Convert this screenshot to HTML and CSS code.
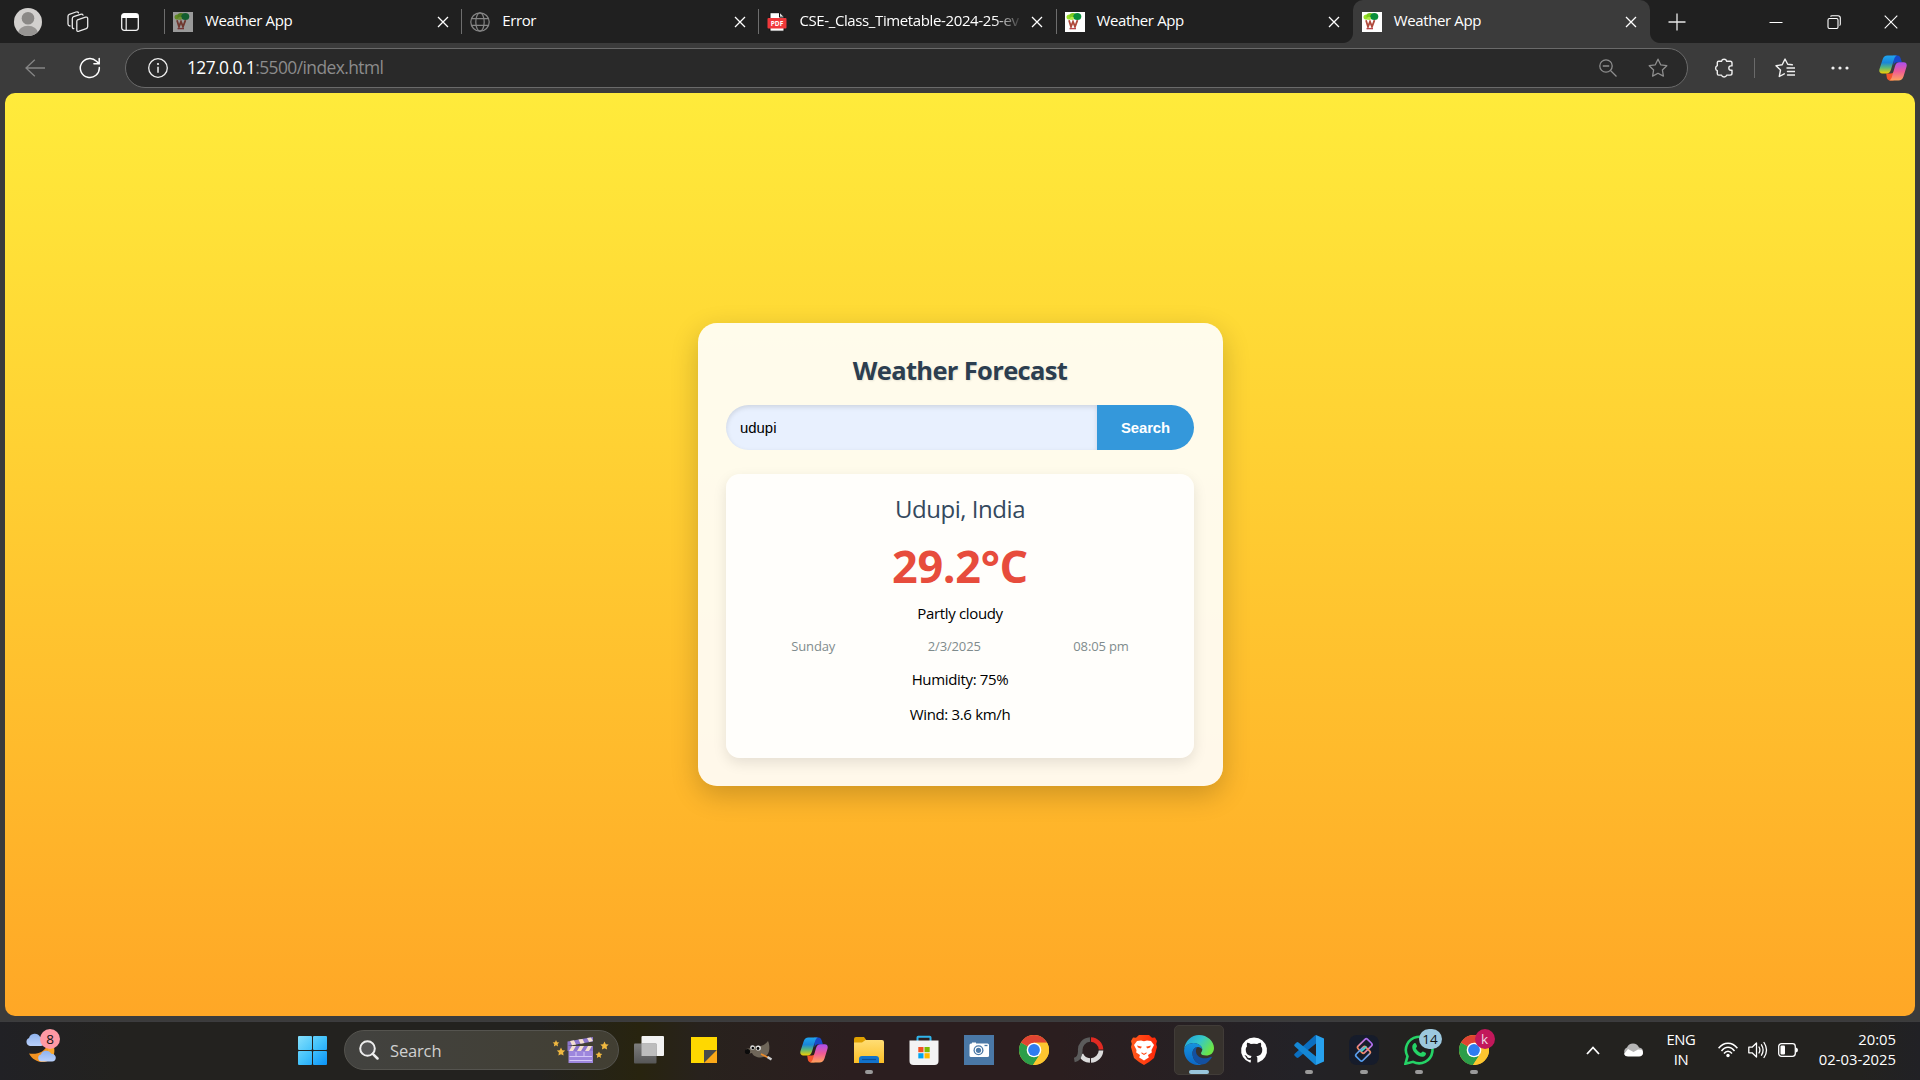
FILE: index.html
```html
<!DOCTYPE html>
<html lang="en">
<head>
<meta charset="utf-8">
<title>Weather App</title>
<link rel="stylesheet" href="styles.css">
</head>
<body>
<svg class="defs" width="0" height="0" aria-hidden="true">
  <defs>
    <linearGradient id="cpA" x1="0" y1="0" x2="0" y2="1"><stop offset="0" stop-color="#1fa5f0"/><stop offset=".4" stop-color="#1a86d8"/><stop offset=".68" stop-color="#5cb878"/><stop offset="1" stop-color="#f5d000"/></linearGradient>
    <linearGradient id="cpB" x1="0" y1="0" x2="0" y2="1"><stop offset="0" stop-color="#a94ff0"/><stop offset=".5" stop-color="#ee5a96"/><stop offset="1" stop-color="#ffa35c"/></linearGradient>
    <linearGradient id="edA" x1="0" y1="0" x2="1" y2=".5"><stop offset="0" stop-color="#1e9de0"/><stop offset=".55" stop-color="#35c8c8"/><stop offset="1" stop-color="#6be548"/></linearGradient>
    <linearGradient id="edB" x1="0" y1="0" x2="0" y2="1"><stop offset="0" stop-color="#1593de"/><stop offset="1" stop-color="#0c66c4"/></linearGradient>
    <linearGradient id="winG" gradientUnits="userSpaceOnUse" x1="0" y1="0" x2="29" y2="29"><stop offset="0" stop-color="#86e0fc"/><stop offset=".5" stop-color="#42c2fb"/><stop offset="1" stop-color="#0a93f8"/></linearGradient>
    <linearGradient id="foldG" x1="0" y1="0" x2="0" y2="1"><stop offset="0" stop-color="#ffdd74"/><stop offset="1" stop-color="#fcbf26"/></linearGradient>
    <linearGradient id="cloudG" x1="0" y1="0" x2="0" y2="1"><stop offset="0" stop-color="#8fb3ee"/><stop offset="1" stop-color="#b9d0fb"/></linearGradient>
    <linearGradient id="brG" x1="0" y1="0" x2="1" y2="0"><stop offset="0" stop-color="#ff5a1c"/><stop offset="1" stop-color="#ff2608"/></linearGradient>
    <linearGradient id="tvG" x1="0" y1="0" x2="0" y2="1"><stop offset="0" stop-color="#7d7d7d"/><stop offset="1" stop-color="#565656"/></linearGradient>
    <linearGradient id="lkA" x1="1" y1="0" x2="0" y2="0"><stop offset="0" stop-color="#a86af0"/><stop offset=".6" stop-color="#d987c8"/><stop offset="1" stop-color="#f5885a"/></linearGradient>
    <linearGradient id="lkB" x1="1" y1="0" x2="0" y2="0"><stop offset="0" stop-color="#f5885a"/><stop offset=".3" stop-color="#7fa4e8"/><stop offset="1" stop-color="#4f9cf0"/></linearGradient>
    <symbol id="favicon" viewBox="0 0 20 20">
      <rect width="20" height="20" fill="#fff"/>
      <ellipse cx="4.500" cy="5" rx="3" ry="2.600" fill="#9be02a"/><ellipse cx="8" cy="4" rx="3.600" ry="2.900" fill="#7ccb1d"/><ellipse cx="12.300" cy="4.500" rx="4" ry="3.600" fill="#0a8f3c"/><ellipse cx="7" cy="6.300" rx="2" ry="1.600" fill="#b2ea4a"/>
      <path d="M4 8.300l2 6.400 2-5 2 5 2.500-6.600" fill="none" stroke="#b04a3c" stroke-width="1.800"/>
      <path d="M4.500 16.600h6.500" stroke="#b9474b" stroke-width="1.400"/>
    </symbol>
    <symbol id="close" viewBox="0 0 12 12"><path d="M1 1l10 10M11 1L1 11" stroke="currentColor" stroke-width="1.300" fill="none"/></symbol>
    <symbol id="copilot" viewBox="0 0 28 26">
      <path d="M14 .5h4.500c1.900 0 2.800 1.500 3.200 3l1.200 3.700h-4.500c-2.200 0-3 .8-3.800 3.200z" fill="#1748c9"/>
      <path d="M7.200 18.500h4.500c2 0 3-.8 3.700-3.200L14.500 25.500H11c-2 0-2.800-1.400-3.200-3z" fill="#f4552c"/>
      <path d="M8.500.5H18c-1.600.6-2.400 2-3 4L12 14.600c-.8 2.600-2 3.900-4.500 3.900H3.300C.7 18.500-.2 16.700.5 14L3.600 4.500C4.400 1.900 6 .5 8.500.5z" fill="url(#cpA)"/>
      <path d="M19.500 25.500H10c1.600-.6 2.500-2 3-4L16 11.300c.8-2.700 2-4 4.500-4h4.200c2.600 0 3.500 1.900 2.800 4.500l-3 9.700c-.8 2.600-2.500 4-5 4z" fill="url(#cpB)"/>
    </symbol>
    <symbol id="chrome" viewBox="0 0 30 30">
      <circle cx="15" cy="15" r="15" fill="#fdc62f"/>
      <path d="M15 15L2 7.500A15 15 0 0 0 14 30l7.500-11.500z" fill="#2b9e49"/>
      <path d="M15 15L2 7.500A15 15 0 0 1 28.100 7.800H15z" fill="#df4432"/>
      <path d="M15 7.800h13.100A15 15 0 0 1 14 30l7.500-11.500z" fill="#fdc62f"/>
      <circle cx="15" cy="15" r="7.300" fill="#fff"/><circle cx="15" cy="15" r="5.900" fill="#2f7cf0"/>
    </symbol>
    <symbol id="star" viewBox="0 0 20 20"><path d="M10 1.200l2.700 5.600 6.100.9-4.400 4.300 1 6.100L10 15.200l-5.400 2.900 1-6.100L1.200 7.700l6.100-.9z" fill="none" stroke="currentColor" stroke-width="1.300" stroke-linejoin="round"/></symbol>
  </defs>
</svg>

<header class="tabstrip">
  <svg class="profile" viewBox="0 0 28 28"><defs><clipPath id="pc"><circle cx="14" cy="14" r="14"/></clipPath></defs><g clip-path="url(#pc)"><rect width="28" height="28" fill="#d2d0ce"/><circle cx="14" cy="10.200" r="6.300" fill="#8a8886"/><ellipse cx="14" cy="25" rx="10" ry="7.200" fill="#979593"/></g></svg>
  <svg class="workspaces" viewBox="0 0 22 22" fill="none" stroke="#e8e8e8" stroke-width="1.300" stroke-linejoin="round" stroke-linecap="round"><path d="M10.500 8.800l8-2.600q2.200-.6 2.200 1.400v8q0 1.500-1.400 2l-7.300 2.600q-2.200.7-2.200-1.300v-8.300q0-1.400.7-1.800z"/><path d="M6.800 17.600q-1.500 0-1.500-1.600V7.700q0-1.500 1.300-2L13.500 3.300q2-.6 2.500.8"/><path d="M3 15q-2-.3-2-2V5.300q0-1.500 1.300-2L9 1q2-.6 2.500.8"/></svg>
  <svg class="tab-actions" viewBox="0 0 18 18"><rect x=".7" y=".7" width="16.600" height="16.600" rx="2.500" fill="none" stroke="#f2f2f2" stroke-width="1.300"/><path d="M.7 5V3.200Q.7.700 3.200.7h11.600q2.500 0 2.500 2.500V5z" fill="#fff"/><path d="M5.200 5v12" stroke="#f2f2f2" stroke-width="1.200"/></svg>
  <nav class="tabs">
    <div class="tab"><svg class="fav dim"><use href="#favicon"/></svg><span class="tab-title">Weather App</span><svg class="x"><use href="#close"/></svg></div>
    <div class="tab"><svg class="fav" viewBox="0 0 20 20" fill="none" stroke="#858585" stroke-width="1.200"><circle cx="10" cy="10" r="9.200"/><ellipse cx="10" cy="10" rx="4.200" ry="9.200"/><path d="M1.500 6.700h17M1.500 13.300h17"/></svg><span class="tab-title">Error</span><svg class="x"><use href="#close"/></svg></div>
    <div class="tab"><svg class="fav" viewBox="0 0 20 20"><path d="M3 .7h9.500L17 5.200v14H3z" fill="#fff" stroke="#111" stroke-width="1"/><path d="M12.500.7v4.500H17" fill="#ddd" stroke="#111"/><rect x=".5" y="6" width="19" height="10.500" rx="1" fill="#f0383b"/><text x="10" y="13.800" class="pdf">PDF</text></svg><span class="tab-title fade">CSE-_Class_Timetable-2024-25-ev</span><svg class="x"><use href="#close"/></svg></div>
    <div class="tab"><svg class="fav"><use href="#favicon"/></svg><span class="tab-title">Weather App</span><svg class="x"><use href="#close"/></svg></div>
    <div class="tab active"><svg class="fav"><use href="#favicon"/></svg><span class="tab-title">Weather App</span><svg class="x"><use href="#close"/></svg></div>
  </nav>
  <svg class="plus" viewBox="0 0 18 18"><path d="M9 .5v17M.5 9h17" stroke="#e8e8e8" stroke-width="1.300"/></svg>
  <div class="window-buttons">
    <svg viewBox="0 0 14 14"><path d="M.5 7.500h13" stroke="#fff"/></svg>
    <svg viewBox="0 0 14 14" fill="none" stroke="#fff" stroke-width="1.100"><rect x="1" y="3.500" width="10" height="10" rx="1.500"/><path d="M3.500 1.500Q3.800.8 5 .8h6q2.300 0 2.300 2.300V9q0 1.300-.8 1.600"/></svg>
    <svg viewBox="0 0 14 14"><path d="M.7.700l12.600 12.600M13.300.7L.7 13.300" stroke="#fff" stroke-width="1.100"/></svg>
  </div>
</header>

<div class="toolbar">
  <svg class="back" viewBox="0 0 20 18" fill="none" stroke="#858585" stroke-width="1.300"><path d="M20 9H1M9.800.7L1 9l8.800 8.300"/></svg>
  <svg class="reload" viewBox="0 0 22 22" fill="none" stroke="#fff" stroke-width="1.500" stroke-linecap="round"><path d="M20.300 10.500A9.500 9.500 0 1 1 17.500 4.300L20 6.600M20.200 1.500v5.300h-5.300"/></svg>
  <div class="address">
    <svg class="info" viewBox="0 0 20 20"><circle cx="10" cy="10" r="9.300" fill="none" stroke="#f0f0f0" stroke-width="1.300"/><path d="M10 8.700v6" stroke="#f0f0f0" stroke-width="1.500"/><circle cx="10" cy="6" r="1.100" fill="#f0f0f0"/></svg>
    <span class="url"><b>127.0.0.1</b>:5500/index.html</span>
    <svg class="zoom" viewBox="0 0 18 18" fill="none" stroke="#8e8e8e" stroke-width="1.300"><circle cx="7" cy="7" r="6.200"/><path d="M11.500 11.500l6 6M3.800 7h6.400"/></svg>
    <svg class="star"><use href="#star"/></svg>
  </div>
  <svg class="puzzle" viewBox="0 0 20 20" fill="none" stroke="#f0f0f0" stroke-width="1.400" stroke-linejoin="round"><path d="M4.700 3.200h2.800a2.700 2.700 0 0 1 5.200 0h3.500q1.800 0 1.800 1.800v2.900h-1a2.200 2.200 0 0 0 0 4.400h1v3q0 1.800-1.800 1.800h-3.500a2.700 2.700 0 0 1-5.200 0H4.700q-1.400 0-1.400-1.400v-3a2.700 2.700 0 0 1 0-5V4.600q0-1.400 1.400-1.400z"/></svg>
  <i class="divider"></i>
  <svg class="favorites" viewBox="0 0 20 20" fill="none" stroke="#f0f0f0" stroke-width="1.400" stroke-linejoin="round" stroke-linecap="round"><path d="M17.300 6.800l-4.600-.5L10 1 7.200 6.800 1 7.700l4.500 4.300-1.200 6.500 5-2.700M12 10h8M12.500 13.500H20M12.500 17H20"/></svg>
  <svg class="dots" viewBox="0 0 18 4" fill="#f0f0f0"><circle cx="2" cy="2" r="1.600"/><circle cx="9" cy="2" r="1.600"/><circle cx="16" cy="2" r="1.600"/></svg>
  <svg class="copilot"><use href="#copilot"/></svg>
</div>

<main class="page">
  <section class="card">
    <h1>Weather Forecast</h1>
    <div class="search-row">
      <input class="city" type="text" value="udupi">
      <button class="go">Search</button>
    </div>
    <article class="result">
      <h2>Udupi, India</h2>
      <p class="temp">29.2°C</p>
      <p class="cond">Partly cloudy</p>
      <div class="when"><span>Sunday</span><span>2/3/2025</span><span>08:05 pm</span></div>
      <p class="humidity">Humidity: 75%</p>
      <p class="wind">Wind: 3.6 km/h</p>
    </article>
  </section>
</main>

<footer class="taskbar">
  <div class="widget">
    <svg viewBox="0 0 34 34"><path d="M26 10c4 6 3 13-2 16.500-6.500 5-16.500 2.500-21-6 8 1.500 17-2 18-9z" fill="#f39322"/><path d="M22 12h6v10h-6z" fill="#f7a62c"/><path d="M4 13a4.200 4.200 0 0 1-1-8 6 6 0 0 1 11-1.200c3.500 0 5 2.400 5 4.800S17.500 13 15 13z" fill="url(#cloudG)"/><path d="M15.500 28.500a3.600 3.600 0 0 1-.5-7.100 5.600 5.600 0 0 1 10.200-.6c3 0 4.600 1.900 4.600 4s-1.500 3.700-3.700 3.700z" fill="url(#cloudG)"/></svg>
    <span class="badge pink">8</span>
  </div>
  <svg class="start" viewBox="0 0 29 29" fill="url(#winG)"><rect width="14" height="14" rx="1"/><rect x="15" width="14" height="14" rx="1"/><rect y="15" width="14" height="14" rx="1"/><rect x="15" y="15" width="14" height="14" rx="1"/></svg>
  <div class="search">
    <svg class="lens" viewBox="0 0 20 20" fill="none" stroke="#eee" stroke-width="2" stroke-linecap="round"><circle cx="8.500" cy="8.500" r="7.300" fill="#555"/><path d="M13.800 13.800l4.700 4.700" stroke-width="2.500"/></svg>
    <span class="search-label">Search</span>
    <svg class="clapper" viewBox="0 0 58 28">
      <g fill="#f0b840"><path d="M4 4l1 2.200 2.300.3-1.700 1.600.4 2.400L4 9.300l-2.100 1.200.4-2.400L.6 6.500 3 6.200z"/><path d="M9 11.500l1.300 2.700 2.900.4-2.100 2 .5 3L9 18.200l-2.600 1.400.5-3-2.100-2 2.900-.4z"/><path d="M52.500 5.500l1.300 2.700 2.900.4-2.100 2 .5 3-2.600-1.400-2.600 1.400.5-3-2.100-2 2.900-.4z"/><path d="M47 15.500l1 2.100 2.300.3-1.700 1.600.4 2.400-2-1.200-2.100 1.200.4-2.400-1.700-1.600 2.300-.3z"/></g>
      <path d="M15.500 5.500L41 1v4.500L15.500 10z" fill="#8c76cc"/><path d="M18 5l4-.7 2 4.300-4 .7zM26.500 3.600l4-.7 2 4.200-4 .7zM35 2.100l4-.7 1.900 3.700-3.800.8z" fill="#f5dfd0"/>
      <rect x="15.500" y="10" width="25.500" height="5" fill="#8c76cc"/><path d="M20 10h4l-3 5h-4zM28 10h4l-3 5h-4zM36 10h4l-3 5h-4z" fill="#f5dfd0"/>
      <rect x="16.500" y="15" width="24.500" height="12" fill="#9d86dd"/><path d="M17.500 20.500h22.500M17.500 24.500h22.500M24 16v4M32 16v4" stroke="#d6c8f7" stroke-width="1"/>
    </svg>
  </div>
  <div class="apps">
    <div class="app"><svg viewBox="0 0 30 30"><rect x="7.500" y="1" width="22.500" height="20" rx="1" fill="#f2f2f2"/><rect y="8.500" width="22.500" height="20" rx="1" fill="url(#tvG)"/><path d="M7.500 8.500h15V21h-15z" fill="#bdbdbd"/></svg></div>
    <div class="app"><svg viewBox="0 0 30 30"><path d="M2 2h26v13L15 28H2z" fill="#ffd800"/><path d="M15 15h13L15 28z" fill="#4a4a4a"/><path d="M28 15v13H15z" fill="#fba919"/></svg></div>
    <div class="app"><svg viewBox="0 0 30 30"><path d="M24 6c1.500 3 2.500 10-1 14-4 4-13 3-15-2l-5 1-1-5 5-1c2-1 5-3 8-2 3 0 6-1 9-5z" fill="#6f6659"/><circle cx="8.500" cy="12.500" r="2.300" fill="#e4e4e4"/><circle cx="14.300" cy="13" r="2.600" fill="#e4e4e4"/><circle cx="8.800" cy="13" r="1.300"/><circle cx="14" cy="13.500" r="1.400"/><circle cx="3.500" cy="16.500" r="2.600" fill="#0b0b0b"/><path d="M17 19l7 3.500" stroke="#e98a2b" stroke-width="1.700"/><path d="M23.500 22l4 2.500" stroke="#cfcfcf" stroke-width="2.400"/></svg></div>
    <div class="app"><svg viewBox="0 0 30 30"><use href="#copilot" x="1" y="2" width="28" height="26"/></svg></div>
    <div class="app"><svg viewBox="0 0 30 30"><path d="M0 4q0-2 2-2h8l3 4h-2l-3 4H0z" fill="#dfa000"/><path d="M0 7.500h8L11.500 5H28q2 0 2 2v21H0z" fill="url(#foldG)"/><path d="M5 28v-4q0-3 3-3h14q3 0 3 3v4z" fill="#1273cc"/><path d="M8 24.500h14" stroke="#0b4f97" stroke-width="1.200"/></svg><i class="dot"></i></div>
    <div class="app"><svg viewBox="0 0 30 30"><path d="M8.500 7V2.500q0-.7.700-.7h11.600q.7 0 .7.700V7" fill="none" stroke="#30b4ea" stroke-width="2"/><path d="M.5 5.500h29V26q0 4-4 4h-21q-4 0-4-4z" fill="#f3f3f3"/><path d="M9.300 12h5.200v5.200H9.300z" fill="#f25022"/><path d="M15.500 12h5.200v5.200h-5.200z" fill="#7fba00"/><path d="M9.300 18.200h5.200v5.200H9.300z" fill="#00a4ef"/><path d="M15.500 18.200h5.200v5.200h-5.200z" fill="#ffb900"/></svg></div>
    <div class="app"><svg viewBox="0 0 30 30"><rect width="30" height="30" fill="#4a78a6"/><path d="M8 7.500h4v2H8z" fill="#fff"/><rect x="5.500" y="8.500" width="19.500" height="13.500" rx="1.500" fill="#fff"/><circle cx="14.500" cy="15.300" r="5" fill="#4a78a6"/><circle cx="14.500" cy="15.300" r="3.700" fill="#fff"/><circle cx="14.500" cy="15.300" r="2.600" fill="#4a78a6"/><path d="M20.500 10.500h3" stroke="#4a78a6" stroke-width="1.300"/></svg></div>
    <div class="app"><svg><use href="#chrome"/></svg></div>
    <div class="app"><svg viewBox="0 0 30 30" fill="none" stroke-width="4.600"><path d="M17 4.500a10.300 10.300 0 0 1 10 10" stroke="#e02a22"/><path d="M27 15.500a10.300 10.300 0 0 1-10 10M16 25.500a10.300 10.300 0 0 1-9-6" stroke="#dcdcdc"/><path d="M16 4.500A10.300 10.300 0 0 0 6.300 16q-.3 8-6 9" stroke="#5b5b5b"/></svg></div>
    <div class="app"><svg viewBox="0 0 30 30"><path d="M10 0h10l3 2.700 3-.3L28 6l-.8 3L28 12l-3 11-5 4-5 3-5-3-5-4L2 12l.8-3L2 6l2-3.600 3 .3z" fill="url(#brG)"/><path d="M8 6l4-.6 3 .8 3-.8 4 .6 3 4-2.500 5 .3 2.500-3.800 2.500.8 2.500-4.800 3-4.800-3 .8-2.500L7.200 17.500l.3-2.500L5 10z" fill="#fff"/><path d="M8 10.500l5 1.300-1.500 1.700L9 12.500zM22 10.500l-5 1.300 1.500 1.700 2.500-1zM12.500 17.200l2.500 1.500 2.500-1.500v1.200L15 20l-2.500-1.600z" fill="#ff4a18"/></svg></div>
    <div class="app current"><svg viewBox="0 0 30 30"><path d="M.2 14C1 6 7.500 0 15 0c8.500 0 15 6.500 15 13 0 5-3.500 7.500-8 7.500-3 0-5-1-5-2.300 0-.9 1.300-1.600 1.300-3.700C18.300 11 14 8 9.500 8 5 8 1.500 10.500.2 14z" fill="url(#edA)"/><path d="M.1 16C0 11 4.500 8 9.500 8c5 0 8.800 3.200 8.800 6.500-.8-1.500-2.500-2.400-4.300-2.400-3.500 0-5.500 3-5.500 6.500 0 5.500 4 10.500 9.500 11C8.500 32 .6 25 .1 16z" fill="url(#edB)"/><path d="M8.500 18.600c0-3.500 2-6 5-6.500-1.300 1.300-1.700 3-1.500 4.700.5 4 4 6.500 8.500 6.500 3 0 5-.7 6.500-1.500.8-.3 1 .3.700.8-2.500 4.200-6 7-9.700 7-5.500-.5-9.500-5.500-9.500-11z" fill="#1450a0"/></svg><i class="dot wide"></i></div>
    <div class="app"><svg viewBox="-2 -2 28 28"><path d="M12 .3a12 12 0 0 0-3.800 23.400c.6.100.8-.3.800-.6v-2c-3.300.7-4-1.600-4-1.600-.6-1.400-1.400-1.800-1.400-1.800-1-.7.1-.7.100-.7 1.200 0 1.900 1.200 1.900 1.200 1 1.800 2.800 1.300 3.500 1 0-.8.400-1.300.7-1.600-2.700-.3-5.500-1.300-5.500-6 0-1.200.5-2.300 1.300-3.100-.2-.4-.6-1.600 0-3.200 0 0 1-.3 3.400 1.200a11.500 11.500 0 0 1 6 0c2.300-1.500 3.300-1.200 3.300-1.200.7 1.600.3 2.800.2 3.200.8.800 1.200 1.900 1.200 3.200 0 4.600-2.800 5.600-5.500 5.900.5.400.9 1.100.9 2.200v3.300c0 .3.100.7.800.6A12 12 0 0 0 12 .3" fill="#fff"/></svg></div>
    <div class="app"><svg viewBox="0 0 30 30"><path d="M22 0v8.500L4.500 22.500q-1 .8-2 0L.7 20.800q-1-1 0-2L20.500.8q.7-.8 1.500-.8z" fill="#0b6fc0"/><path d="M22 30v-8.500L4.500 7.500q-1-.8-2 0L.7 9.200q-1 1 0 2L20.500 29.200q.7.800 1.500.8z" fill="#1587d4"/><path d="M22 0l8 3.500v23L22 30z" fill="#27a1ee"/></svg><i class="dot"></i></div>
    <div class="app"><svg viewBox="0 0 30 30" fill="none" stroke-width="1.700"><rect width="30" height="30" rx="8" fill="#161c2b"/><rect x="-6.700" y="-4.600" width="13.400" height="9.200" rx="1.800" transform="translate(15.800 11) rotate(-45)" stroke="url(#lkA)"/><rect x="-6.700" y="-4.600" width="13.400" height="9.200" rx="1.800" transform="translate(14 18.800) rotate(-45)" stroke="url(#lkB)"/><path d="M12 16.500l5.500-5" stroke="#4fd3c8"/></svg><i class="dot"></i></div>
    <div class="app"><svg viewBox="0 0 30 30"><path d="M1.500 28.700l2-7.300A13.300 13.300 0 1 1 9 26.800z" fill="#20201f" stroke="#25d366" stroke-width="2.600"/><path d="M10 8.500c.8-.8 1.600-.5 2 .3l1 2.300c.2.600-.9 1.700-1.200 2.200 1 2.200 2.700 3.800 5 4.800.6-.3 1.500-1.900 2.200-1.700l2.600 1.300c.8.400.5 3.300-2.600 4-4.500.8-11.500-5.500-10.700-10.500.1-1 .8-2 1.700-2.700z" fill="#25d366"/></svg><span class="badge blue">14</span><i class="dot"></i></div>
    <div class="app"><svg><use href="#chrome"/></svg><span class="badge magenta">k</span><i class="dot"></i></div>
  </div>
  <div class="tray">
    <svg class="chev" viewBox="0 0 14 9"><path d="M1 8l6-6.500L13 8" fill="none" stroke="#fff" stroke-width="1.800"/></svg>
    <svg class="cloud" viewBox="0 0 20 14"><path d="M4.500 13A4.500 4.500 0 0 1 4 4.500 6.500 6.500 0 0 1 16 4.500q4 .5 4 4.200T16 13z" fill="#b5b5b5"/><path d="M5 6l-4 5q1 2.500 4 2.500h11q3.800-.3 4-3.500 0-2-1.300-3.300L15 6.500 10.500 9z" fill="#fff"/></svg>
    <div class="lang"><span>ENG</span><span>IN</span></div>
    <svg class="wifi" viewBox="0 0 20 16" fill="none" stroke="#fff" stroke-width="1.500"><path d="M.6 6.300Q4.500 1.200 10 1.200t9.400 5.100M3.500 9Q6.300 5.200 10 5.200T16.500 9M6 11.500q1.700-2.300 4-2.300t4 2.300"/><circle cx="10" cy="13.500" r="1.700" fill="#fff" stroke="none"/></svg>
    <svg class="vol" viewBox="0 0 20 18" fill="none" stroke="#fff" stroke-width="1.300" stroke-linejoin="round" stroke-linecap="round"><path d="M.8 6.200h3.300L8.500 2v14l-4.400-4.200H.8zM11 6q1.800 3 0 6M13.500 3.800q3.200 5.200 0 10.400M16 1.500q5 7.500 0 15"/></svg>
    <svg class="batt" viewBox="0 0 20 14"><rect x=".7" y=".7" width="16.600" height="12.600" rx="2.800" fill="none" stroke="#fff" stroke-width="1.300"/><rect x="2.500" y="2.500" width="4.500" height="9" rx="1" fill="#fff"/><path d="M18 4.500q2 .5 2 2.500t-2 2.500z" fill="#fff"/></svg>
    <div class="clock"><span>20:05</span><span>02-03-2025</span></div>
  </div>
</footer>
</body>
</html>
```
FILE: styles.css
```css
* { box-sizing: border-box; }
body { margin: 0; width: 1920px; height: 1080px; overflow: hidden; display: flex; flex-direction: column; background: #3b3b3b; color: #fff; font-family: "Open Sans", "Noto Sans", sans-serif; }
svg { display: block; flex: none; }
.defs { position: absolute; }
p, h1, h2 { margin: 0; }

/* browser tab strip */
.tabstrip { height: 43px; flex: none; display: flex; align-items: center; background: #202020; }
.profile { width: 28px; height: 28px; margin-left: 14px; }
.workspaces { width: 22px; height: 22px; margin-left: 25px; }
.tab-actions { width: 18px; height: 18px; margin-left: 32px; }
.tabs { display: flex; margin-left: 25px; height: 43px; }
.tab { position: relative; width: 297.200px; display: flex; align-items: center; padding: 1px 0 0 9px; }
.tab::before { content: ""; position: absolute; left: 0; top: 9px; width: 1px; height: 25px; background: #6e6e6e; }
.tab.active { background: #3b3b3b; border-radius: 10px 10px 0 0; }
.tab.active::before, .tab.active::after { width: 10px; height: 10px; top: auto; bottom: 0; }
.tab.active::before { left: -10px; background: radial-gradient(circle at 0 0, transparent 9.500px, #3b3b3b 10.500px); }
.tab.active::after { content: ""; position: absolute; right: -10px; background: radial-gradient(circle at 100% 0, transparent 9.500px, #3b3b3b 10.500px); }
.fav { width: 20px; height: 20px; }
.fav.dim { opacity: .55; }
.tab-title { margin: 0 0 5px 12px; width: 222px; font-size: 15px; line-height: 20px; letter-spacing: -.38px; white-space: nowrap; }
.fade { -webkit-mask-image: linear-gradient(90deg, #000 195px, transparent 224px); mask-image: linear-gradient(90deg, #000 195px, transparent 224px); }
.pdf { font: bold 6.500px "Open Sans", sans-serif; fill: #fff; text-anchor: middle; }
.x { width: 12px; height: 12px; margin-left: 9.500px; }
.plus { width: 18px; height: 18px; margin-left: 18px; }
.window-buttons { margin-left: auto; margin-right: 22px; display: flex; gap: 43.500px; }
.window-buttons svg { width: 14px; height: 14px; }

/* address toolbar */
.toolbar { height: 50px; flex: none; display: flex; align-items: center; }
.back { width: 20px; height: 18px; margin-left: 25px; }
.reload { width: 22px; height: 22px; margin-left: 34px; }
.address { width: 1563px; height: 40px; margin-left: 24px; border: 1px solid #6a6a6a; border-radius: 20px; background: #292929; display: flex; align-items: center; padding: 0 19px 0 22px; color: #8c8c8c; }
.info { width: 20px; height: 20px; }
.url { margin: 0 0 3px 19px; font-size: 17.400px; line-height: 24px; letter-spacing: -.57px; white-space: nowrap; }
.url b { font-weight: 400; color: #fff; }
.zoom { width: 18px; height: 18px; margin-left: auto; }
.star { width: 20px; height: 20px; margin-left: 31px; color: #8e8e8e; }
.puzzle { width: 20px; height: 20px; margin-left: 26px; }
.divider { width: 1px; height: 20px; margin: 0 20px; background: #6a6a6a; }
.favorites { width: 20px; height: 20px; }
.dots { width: 18px; height: 4px; margin-left: 36px; }
.copilot { width: 28px; height: 26px; margin-left: 30px; }

/* weather page */
.page { flex: none; height: 923px; margin: 0 5px 5px; padding-left: 1px; border-radius: 10px; background: linear-gradient(#ffeb3b, #ffa726); display: flex; align-items: center; justify-content: center; color: #000; }
.card { width: 525px; height: 463px; padding: 28px 29px 28px 28px; border-radius: 19px; background: rgba(255,255,255,.9); box-shadow: 0 9px 28px rgba(0,0,0,.2); text-align: center; }
h1 { font-size: 25.500px; line-height: 38px; font-weight: 700; letter-spacing: -.65px; color: #2c3e50; text-shadow: 1px 1px 2px rgba(0,0,0,.1); }
.search-row { display: flex; margin-top: 16px; height: 45px; }
.city { width: 371px; border: 0; border-radius: 23px 0 0 23px; padding: 0 14px; background: #e8f0fe; box-shadow: inset 0 2px 5px rgba(0,0,0,.12); font: 14.900px "Liberation Sans", sans-serif; color: #000; }
.go { flex: 1; border: 0; border-radius: 0 23px 23px 0; background: #3498db; color: #fff; font: bold 14.900px "Liberation Sans", sans-serif; letter-spacing: -.1px; }
.result { height: 284px; margin-top: 24px; border-radius: 14px; background: rgba(255,255,255,.8); box-shadow: 0 5px 14px rgba(0,0,0,.1); padding-top: 18px; }
h2 { font-size: 24px; line-height: 34px; font-weight: 400; letter-spacing: -.45px; color: #34495e; }
.temp { margin-top: 13px; font-size: 45px; line-height: 54px; font-weight: 700; letter-spacing: -.35px; color: #e74c3c; }
.cond, .humidity, .wind { font-size: 15px; line-height: 20px; letter-spacing: -.34px; }
.cond { margin-top: 10px; }
.when { margin-top: 14px; display: flex; justify-content: space-around; padding: 0 19px; font-size: 13px; line-height: 18px; letter-spacing: -.15px; color: #7f8c8d; }
.humidity { margin-top: 14px; }
.wind { margin-top: 15px; }

/* desktop taskbar */
.taskbar { height: 59px; flex: none; display: flex; align-items: center; padding-bottom: 2px; border-top: 1px solid #3c3c3e; background: linear-gradient(90deg, #212125 0, #23221f 120px, #23221f 540px, #28240f 640px, #28221d 700px, #2b1e1f 850px, #2b1e1f 1060px, #232227 1300px, #23221f 1420px, #23221f 1860px, #212125 1920px); }
.widget { position: relative; width: 34px; height: 34px; margin-left: 26px; }
.widget svg { width: 34px; height: 34px; }
.badge { position: absolute; border-radius: 50%; height: 20px; width: 20px; display: flex; align-items: center; justify-content: center; font-size: 13.500px; color: #111; }
.pink { left: 14px; top: -4px; background: #ff99a4; }
.start { width: 29px; height: 29px; margin-left: 238px; }
.search { width: 275px; height: 40px; margin-left: 17px; border-radius: 20px; border: 1px solid #55544f; background: linear-gradient(90deg, #42423f, #423f33); display: flex; align-items: center; padding: 0 8px 0 14px; }
.lens { width: 20px; height: 20px; }
.search-label { margin-left: 11px; font-size: 16.500px; letter-spacing: -.15px; color: #d0d0d0; }
.clapper { width: 58px; height: 28px; margin-left: auto; }
.apps { display: flex; margin-left: 2.500px; }
.app { position: relative; width: 55px; height: 50px; display: flex; align-items: center; justify-content: center; }
.app svg { width: 30px; height: 30px; }
.current { width: 50px; margin: 0 2.500px; border-radius: 5px; background: #37322d; border: 1px solid #413c38; }
.dot { position: absolute; left: 50%; bottom: 1px; width: 8px; height: 4px; margin-left: -4px; border-radius: 2px; background: #9a9a9a; }
.wide { bottom: 0; width: 20px; margin-left: -10px; background: #99c6dc; }
.blue { left: 27px; top: 4px; width: 23px; background: #9cc8de; border-radius: 10px; }
.magenta { left: 28px; top: 4px; background: #c2185b; color: #eedde4; }
.tray { margin-left: auto; padding-right: 24px; display: flex; align-items: center; font-size: 14.800px; line-height: 20px; }
.chev { width: 14px; height: 9px; }
.cloud { width: 20px; height: 14px; margin-left: 23px; }
.lang { width: 36px; margin: 0 0 2px 20px; display: flex; flex-direction: column; align-items: center; letter-spacing: -.4px; }
.wifi { width: 20px; height: 16px; margin-left: 19px; }
.vol { width: 20px; height: 18px; margin-left: 10px; }
.batt { width: 20px; height: 14px; margin-left: 10px; }
.clock { width: 98px; margin-bottom: 2px; display: flex; flex-direction: column; align-items: flex-end; }
```
